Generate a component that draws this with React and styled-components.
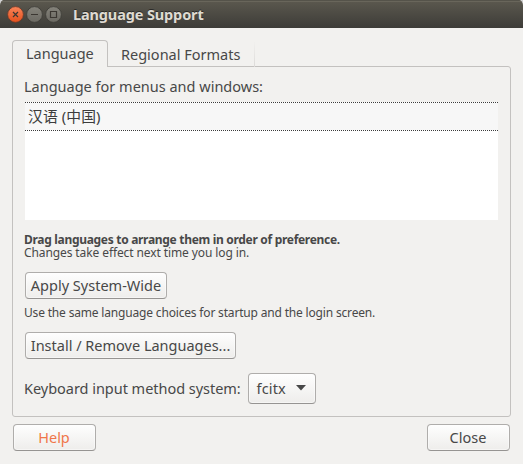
import React from "react";
import styled, { createGlobalStyle } from "styled-components";

const GlobalStyle = createGlobalStyle`
  * { box-sizing: border-box; }
  body {
    margin: 0;
    background: #d3d3d4;
    font-family: "Noto Sans", "Noto Sans CJK SC", sans-serif;
    font-size: 14.5px;
    color: #484848;
    overflow: hidden;
  }
`;

const Window = styled.main`
  width: 523px;
  height: 464px;
  display: flex;
  flex-direction: column;
  background: #f2f1ef;
  border-radius: 5px 5px 0 0;
  overflow: hidden;
  white-space: nowrap;
`;

const TitleBar = styled.header`
  height: 28px;
  flex: none;
  display: flex;
  align-items: center;
  padding: 1px 0 0 7px;
  background: linear-gradient(#5c594f, #3d3c38);
  box-shadow: inset 0 1px #55534a, inset 0 2px #69665b;
`;

const Controls = styled.div`
  display: flex;
  gap: 2px;
`;

const Control = styled.button`
  width: 17px;
  height: 17px;
  padding: 0;
  border: 0;
  background: none;
  svg { display: block; }
`;

const Title = styled.h1`
  margin: 0 0 2px 11px;
  font-size: 14.5px;
  line-height: 20px;
  font-weight: 700;
  color: #dfdbd2;
  text-shadow: 0 -1px #2b2a27;
  letter-spacing: ${(p) => p.$tracking}px;
`;

const Content = styled.div`
  flex: 1;
  display: flex;
  flex-direction: column;
  padding: 12px 12px 0;
`;

const Tabs = styled.nav`
  height: 27px;
  flex: none;
  display: flex;
  z-index: 1;
`;

const Tab = styled.button`
  font: inherit;
  color: inherit;
  line-height: 20px;
  height: 27px;
  width: ${(p) => p.$width}px;
  display: flex;
  align-items: flex-start;
  padding: ${(p) => (p.$active ? "2px 0 0 13px" : "3px 0 0 12px")};
  background: ${(p) => (p.$active ? "#f2f1ef" : "transparent")};
  border: 1px solid ${(p) => (p.$active ? "#c3c1bf" : "transparent")};
  border-bottom: 0;
  border-radius: ${(p) => (p.$active ? "4px 4px 0 0" : "0")};
  ${(p) => !p.$active && "border-image: linear-gradient(transparent, #dcdad8) 0 1 0 0;"}
`;

const Panel = styled.section`
  width: 499px;
  height: 351px;
  margin-top: -1px;
  padding: 9px 12px 0 11px;
  border: 1px solid #c3c1bf;
  border-radius: 0 3px 3px 3px;
  display: flex;
  flex-direction: column;
  align-items: flex-start;
`;

const Label = styled.span`
  line-height: 20px;
  letter-spacing: ${(p) => p.$tracking || 0}px;
`;

const LanguageList = styled.ul`
  list-style: none;
  margin: 6px 0 0 1px;
  padding: 0;
  width: 473px;
  height: 118px;
  flex: none;
  background: #fff;
`;

const LanguageItem = styled.li`
  height: 29px;
  padding: 4px 0 0 3px;
  font-size: 14.8px;
  line-height: 20px;
  color: #3c3c3c;
  letter-spacing: 0.1px;
  background:
    repeating-linear-gradient(90deg, #3c3c3c 0 1px, #fff 1px 2px) top / 100% 1px no-repeat,
    repeating-linear-gradient(90deg, #3c3c3c 0 1px, #fff 1px 2px) bottom / 100% 1px no-repeat,
    #f7f7f7;
`;

const Hint = styled.p`
  margin: ${(p) => p.$top || 0}px 0 0;
  font-size: 12px;
  line-height: 13px;
  font-weight: ${(p) => (p.$strong ? 700 : 400)};
  letter-spacing: ${(p) => p.$tracking}px;
`;

const Button = styled.button`
  font: inherit;
  color: ${(p) => (p.$accent ? "#f0764a" : "inherit")};
  line-height: 20px;
  width: ${(p) => p.$width}px;
  height: 27px;
  padding: 0 1px 2px 0;
  flex: none;
  display: flex;
  align-items: center;
  justify-content: center;
  border: 1px solid #afadab;
  border-bottom-color: #969492;
  border-radius: 4px;
  background: linear-gradient(#fefefe, #eeedeb);
  box-shadow: inset 0 0 0 1px rgba(255, 255, 255, 0.45);
`;

const PanelButton = styled(Button)`
  margin: 13px 0 0 1px;
  padding-right: 0;
`;

const Select = styled(Button)`
  height: 31px;
  margin-left: 7px;
  padding-bottom: 1px;
  gap: 10px;
  letter-spacing: 0.15px;
`;

const InputRow = styled.div`
  display: flex;
  align-items: flex-start;
  margin-top: 14px;
  ${Label} { margin-top: 5px; }
`;

const Footer = styled.footer`
  display: flex;
  justify-content: space-between;
  padding: 7px 1px 0;
`;

const controls = [
  { name: "Close", from: "#f98459", to: "#e4501c", rim: "#63392b", glyph: "M6 6 11 11M11 6 6 11" },
  { name: "Minimize", from: "#85837b", to: "#6b6962", rim: "#3c3b36", glyph: "M5 8.5H12" },
  { name: "Maximize", from: "#85837b", to: "#6b6962", rim: "#3c3b36", glyph: "M5.5 5.5H11.5V11.5H5.5Z" },
];

export default function App() {
  return (
    <>
      <GlobalStyle />
      <Window>
        <TitleBar>
          <Controls>
            {controls.map((c) => (
              <Control key={c.name} aria-label={c.name}>
                <svg width="17" height="17" viewBox="0 0 17 17">
                  <defs>
                    <linearGradient id={c.name} x2="0" y2="1">
                      <stop stopColor={c.from} />
                      <stop offset="1" stopColor={c.to} />
                    </linearGradient>
                  </defs>
                  <circle cx="8.5" cy="8.5" r="7.9" fill={`url(#${c.name})`} stroke={c.rim} strokeWidth="0.8" />
                  <path d={c.glyph} fill="none" stroke="#3b3732" strokeWidth="1.2" />
                </svg>
              </Control>
            ))}
          </Controls>
          <Title $tracking={-0.13}>Language Support</Title>
        </TitleBar>
        <Content>
          <Tabs>
            <Tab $active $width={96}>Language</Tab>
            <Tab $width={147}>Regional Formats</Tab>
          </Tabs>
          <Panel>
            <Label>Language for menus and windows:</Label>
            <LanguageList>
              <LanguageItem>汉语 (中国)</LanguageItem>
            </LanguageList>
            <Hint $strong $top={13} $tracking={-0.305}>Drag languages to arrange them in order of preference.</Hint>
            <Hint $tracking={-0.1}>Changes take effect next time you log in.</Hint>
            <PanelButton $width={142}>Apply System-Wide</PanelButton>
            <Hint $top={7} $tracking={-0.175}>Use the same language choices for startup and the login screen.</Hint>
            <PanelButton $width={211}>Install / Remove Languages...</PanelButton>
            <InputRow>
              <Label $tracking={-0.03}>Keyboard input method system:</Label>
              <Select $width={68}>
                fcitx
                <svg width="10" height="6" viewBox="0 0 10 6"><path d="M0 0H10L5 5.5Z" fill="#484848" /></svg>
              </Select>
            </InputRow>
          </Panel>
          <Footer>
            <Button $accent $width={83}>Help</Button>
            <Button $width={83}>Close</Button>
          </Footer>
        </Content>
      </Window>
    </>
  );
}
